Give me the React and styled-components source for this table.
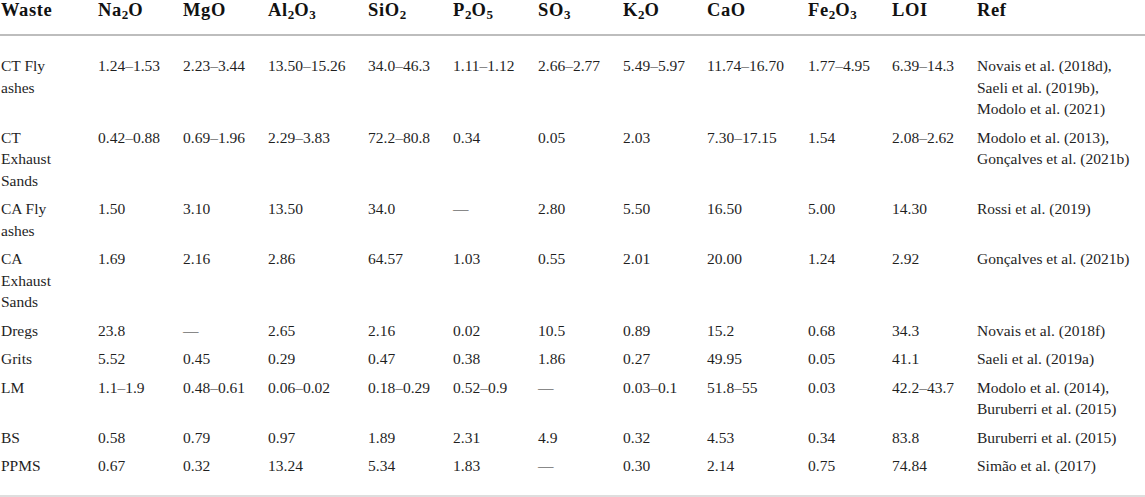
import React from "react";
import styled, { createGlobalStyle } from "styled-components";

const GlobalStyle = createGlobalStyle`
  html, body {
    margin: 0;
    padding: 0;
    background: #ffffff;
  }
  body {
    font-family: "Liberation Serif", "Times New Roman", serif;
  }
`;

const Table = styled.table`
  width: 1145px;
  border-collapse: collapse;
  table-layout: fixed;
  font-family: "Liberation Serif", "Times New Roman", serif;
`;

const HeadCell = styled.th`
  text-align: left;
  vertical-align: top;
  font-weight: 700;
  font-size: 18.5px;
  letter-spacing: 0.6px;
  line-height: 20px;
  color: #111111;
  padding: 0 ${(p) => (p.$wrap ? "30px" : "0")} 14px 1px;
  border-bottom: 2px solid #bdbdbd;
  white-space: nowrap;
`;

const Sub = styled.sub`
  font-size: 13px;
  line-height: 0;
  vertical-align: -3px;
  letter-spacing: 0;
`;

const Row = styled.tr`
  &:first-child > td {
    padding-top: 19px;
  }
  &:last-child > td {
    padding-bottom: 18px;
    border-bottom: 2px solid #dedede;
  }
`;

const Cell = styled.td`
  vertical-align: top;
  font-size: 15.5px;
  line-height: 21.5px;
  color: #1f1f1f;
  padding: 4px ${(p) => (p.$wrap ? "30px" : "0")} 3px 1px;
  white-space: ${(p) => (p.$wrap ? "normal" : "nowrap")};
`;

const RefLine = styled.span`
  display: block;
`;

const widths = [97, 85, 85, 100, 85, 85, 85, 84, 101, 84, 85, 169];

const headers = [
  <>Waste</>,
  <>Na<Sub>2</Sub>O</>,
  <>MgO</>,
  <>Al<Sub>2</Sub>O<Sub>3</Sub></>,
  <>SiO<Sub>2</Sub></>,
  <>P<Sub>2</Sub>O<Sub>5</Sub></>,
  <>SO<Sub>3</Sub></>,
  <>K<Sub>2</Sub>O</>,
  <>CaO</>,
  <>Fe<Sub>2</Sub>O<Sub>3</Sub></>,
  <>LOI</>,
  <>Ref</>,
];

const rows = [
  {
    waste: "CT Fly ashes",
    values: ["1.24–1.53", "2.23–3.44", "13.50–15.26", "34.0–46.3", "1.11–1.12", "2.66–2.77", "5.49–5.97", "11.74–16.70", "1.77–4.95", "6.39–14.3"],
    refs: ["Novais et al. (2018d),", "Saeli et al. (2019b),", "Modolo et al. (2021)"],
  },
  {
    waste: "CT Exhaust Sands",
    values: ["0.42–0.88", "0.69–1.96", "2.29–3.83", "72.2–80.8", "0.34", "0.05", "2.03", "7.30–17.15", "1.54", "2.08–2.62"],
    refs: ["Modolo et al. (2013),", "Gonçalves et al. (2021b)"],
  },
  {
    waste: "CA Fly ashes",
    values: ["1.50", "3.10", "13.50", "34.0", "—", "2.80", "5.50", "16.50", "5.00", "14.30"],
    refs: ["Rossi et al. (2019)"],
  },
  {
    waste: "CA Exhaust Sands",
    values: ["1.69", "2.16", "2.86", "64.57", "1.03", "0.55", "2.01", "20.00", "1.24", "2.92"],
    refs: ["Gonçalves et al. (2021b)"],
  },
  {
    waste: "Dregs",
    values: ["23.8", "—", "2.65", "2.16", "0.02", "10.5", "0.89", "15.2", "0.68", "34.3"],
    refs: ["Novais et al. (2018f)"],
  },
  {
    waste: "Grits",
    values: ["5.52", "0.45", "0.29", "0.47", "0.38", "1.86", "0.27", "49.95", "0.05", "41.1"],
    refs: ["Saeli et al. (2019a)"],
  },
  {
    waste: "LM",
    values: ["1.1–1.9", "0.48–0.61", "0.06–0.02", "0.18–0.29", "0.52–0.9", "—", "0.03–0.1", "51.8–55", "0.03", "42.2–43.7"],
    refs: ["Modolo et al. (2014),", "Buruberri et al. (2015)"],
  },
  {
    waste: "BS",
    values: ["0.58", "0.79", "0.97", "1.89", "2.31", "4.9", "0.32", "4.53", "0.34", "83.8"],
    refs: ["Buruberri et al. (2015)"],
  },
  {
    waste: "PPMS",
    values: ["0.67", "0.32", "13.24", "5.34", "1.83", "—", "0.30", "2.14", "0.75", "74.84"],
    refs: ["Simão et al. (2017)"],
  },
];

export default function App() {
  return (
    <>
      <GlobalStyle />
      <Table>
        <colgroup>
          {widths.map((w, i) => (
            <col key={i} style={{ width: `${w}px` }} />
          ))}
        </colgroup>
        <thead>
          <tr>
            {headers.map((h, i) => (
              <HeadCell key={i} $wrap={i === 0}>
                {h}
              </HeadCell>
            ))}
          </tr>
        </thead>
        <tbody>
          {rows.map((r) => (
            <Row key={r.waste}>
              <Cell $wrap>{r.waste}</Cell>
              {r.values.map((v, i) => (
                <Cell key={i}>{v}</Cell>
              ))}
              <Cell>
                {r.refs.map((ref) => (
                  <RefLine key={ref}>{ref}</RefLine>
                ))}
              </Cell>
            </Row>
          ))}
        </tbody>
      </Table>
    </>
  );
}
